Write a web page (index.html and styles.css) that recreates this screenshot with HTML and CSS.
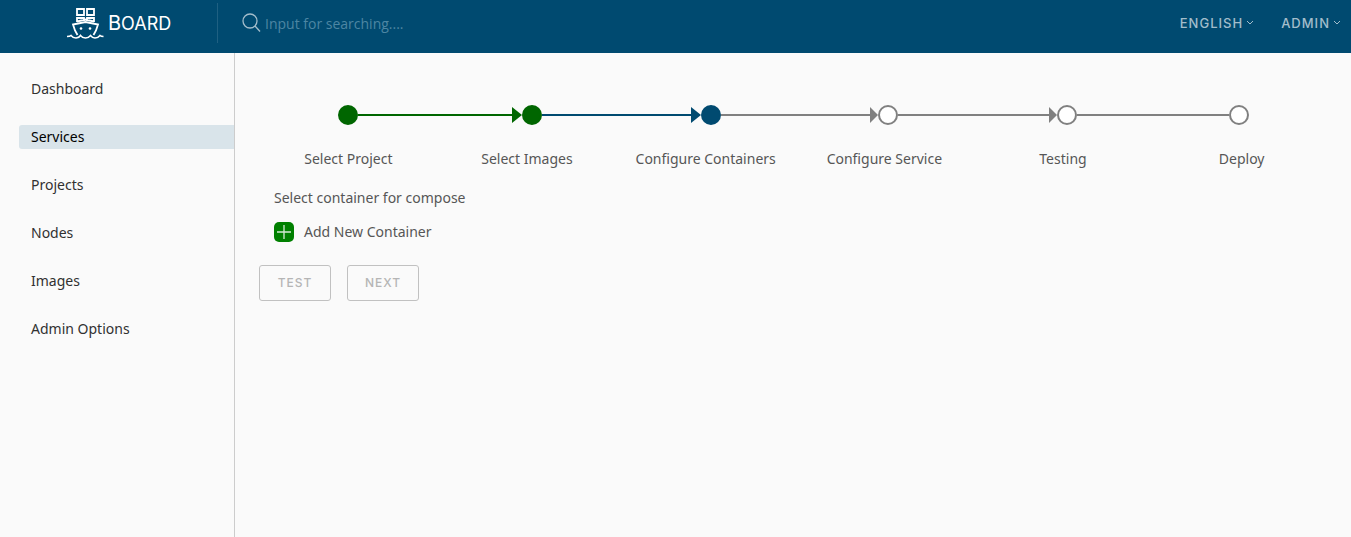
FILE: index.html
```html
<!DOCTYPE html>
<html lang="en">
<head>
<meta charset="utf-8">
<title>Board</title>
<link rel="stylesheet" href="styles.css">
</head>
<body>
<header class="header">
  <a class="brand" href="#">
    <svg class="brand-logo" width="38" height="32" viewBox="0 0 38 32" fill="none" stroke="#fff" stroke-width="1.800">
      <path d="M10 2h7v6h-7zM20 2h7v6h-7z"/>
      <path d="M10 15v-4h7v3M20 14v-3h7v4M10 14.500l8.500-2 8.500 2"/>
      <path d="M10.500 28L8 23.500 6 17.500l12.500-2.500L31 17.500l-2 6-2.500 4.500"/>
      <path d="M0 29.500q3 0 4-1 2 2.500 5 2.500 3 0 4.500-2.500 2 2.500 5 2.500t5-2.500q2 2.500 4.500 2.500 3 0 5-2.500 1 1 3.500 1" stroke-width="1.600"/>
      <circle cx="14" cy="21.500" r="1.300" fill="#fff" stroke="none"/>
      <circle cx="23" cy="21.500" r="1.300" fill="#fff" stroke="none"/>
    </svg>
    <span class="brand-name">Board</span>
  </a>
  <form class="search">
    <svg width="20" height="20" viewBox="0 0 20 20" fill="none" stroke="#a3bdcb" stroke-width="1.300">
      <circle cx="8" cy="8" r="7"/><path d="M13 13l5 5.500"/>
    </svg>
    <input class="search-input" type="text" aria-label="Search" placeholder="Input for searching....">
  </form>
  <nav class="header-actions">
    <button class="header-button" type="button">ENGLISH
      <svg width="8" height="6" viewBox="0 0 8 6" fill="none" stroke="currentColor"><path d="M1 1l3 3 3-3"/></svg>
    </button>
    <button class="header-button" type="button">ADMIN
      <svg width="8" height="6" viewBox="0 0 8 6" fill="none" stroke="currentColor"><path d="M1 1l3 3 3-3"/></svg>
    </button>
  </nav>
</header>
<div class="body">
  <nav class="sidebar">
    <a class="nav-link" href="#">Dashboard</a>
    <a class="nav-link active" href="#">Services</a>
    <a class="nav-link" href="#">Projects</a>
    <a class="nav-link" href="#">Nodes</a>
    <a class="nav-link" href="#">Images</a>
    <a class="nav-link" href="#">Admin Options</a>
  </nav>
  <main class="content">
    <div class="track">
      <span class="dot done"></span><span class="line done arrow"></span>
      <span class="dot done"></span><span class="line current arrow"></span>
      <span class="dot current"></span><span class="line arrow short"></span>
      <span class="dot"></span><span class="line arrow short"></span>
      <span class="dot"></span><span class="line"></span>
      <span class="dot"></span>
    </div>
    <ol class="labels">
      <li>Select Project</li>
      <li>Select Images</li>
      <li>Configure Containers</li>
      <li>Configure Service</li>
      <li>Testing</li>
      <li>Deploy</li>
    </ol>
    <section class="compose">
      <p class="compose-title">Select container for compose</p>
      <button class="add" type="button">
        <svg width="20" height="20" viewBox="0 0 20 20"><rect width="20" height="20" rx="5" fill="#008000"/><path d="M3 10h14M10 3v14" stroke="#d5ead5" stroke-width="1.300"/></svg>
        Add New Container
      </button>
    </section>
    <div class="buttons">
      <button class="btn" type="button" disabled>TEST</button>
      <button class="btn" type="button" disabled>NEXT</button>
    </div>
  </main>
</div>
</body>
</html>
```
FILE: styles.css
```css
* { box-sizing: border-box; }
body {
  margin: 0;
  min-height: 100vh;
  display: flex;
  flex-direction: column;
  background: #fafafa;
  color: #565656;
  font-family: "Noto Sans", sans-serif;
  font-size: 14px;
  line-height: 24px;
}
button { font: inherit; color: inherit; background: none; border: 0; padding: 0; }
.header {
  display: flex;
  align-items: center;
  height: 53px;
  padding-bottom: 7px;
  background: #004a70;
}
.brand {
  display: flex;
  align-items: center;
  gap: 3px;
  width: 218px;
  height: 40px;
  padding-left: 67px;
  border-right: 1px solid #1f6082;
  color: #fff;
  text-decoration: none;
}
.brand-name {
  font-family: Inter, sans-serif;
  font-size: 18px;
  text-transform: uppercase;
}
.brand-name::first-letter { font-size: 20px; }
.search { flex: 1; display: flex; align-items: center; gap: 3px; padding-left: 24px; }
.search-input {
  flex: 1;
  border: 0;
  padding: 0;
  outline: 0;
  background: none;
  color: #fff;
  font-family: "Open Sans", sans-serif;
  font-size: 14px;
}
.search-input::placeholder { color: #4d86a3; opacity: 1; }
.header-actions { display: flex; gap: 27px; padding-right: 10px; }
.header-button {
  display: flex;
  align-items: center;
  gap: 3px;
  color: #a3bdcb;
  font-family: Inter, sans-serif;
  font-size: 13px;
  font-weight: 500;
  letter-spacing: 1px;
}
.body { flex: 1; display: flex; }
.sidebar {
  display: flex;
  flex-direction: column;
  gap: 24px;
  width: 235px;
  padding: 24px 0 24px 19px;
  border-right: 1px solid #ccc;
}
.nav-link {
  padding-left: 12px;
  border-radius: 3px 0 0 3px;
  color: #313131;
  text-decoration: none;
}
.nav-link.active { background: #d9e4ea; color: #000; }
.content { flex: 1; padding: 52px 20px 24px 24px; }
.track {
  display: grid;
  grid-template-columns: 20px 164fr 20px 159fr 20px 157fr 20px 159fr 20px 152fr 20px;
  align-items: center;
  padding: 0 82px 0 79px;
}
.dot { height: 20px; border: 2px solid #808080; border-radius: 50%; background: #fff; }
.dot.done { background: #060; border-color: #060; }
.dot.current { background: #004a70; border-color: #004a70; }
.line { display: flex; align-items: center; color: #808080; }
.line.done { color: #060; }
.line.current { color: #004a70; }
.line::before { content: ""; flex: 1; height: 2px; background: currentColor; }
.line.arrow::after {
  content: "";
  border: 8px solid transparent;
  border-left: 10px solid currentColor;
  border-right: 0;
}
.line.short::after { border-left-width: 8px; }
.labels {
  display: grid;
  grid-template-columns: repeat(6, 1fr);
  margin: 22px 0 0;
  padding: 0;
  list-style: none;
  text-align: center;
}
.compose {
  display: flex;
  flex-direction: column;
  align-items: flex-start;
  gap: 10px;
  padding: 15px 15px 0;
}
.compose-title { margin: 0; }
.add { display: flex; align-items: center; gap: 10px; }
.buttons { display: flex; gap: 16px; padding-top: 21px; }
.btn {
  width: 72px;
  height: 36px;
  border: 1px solid #c1c1c1;
  border-radius: 3px;
  color: #b5b5b5;
  font-family: Inter, sans-serif;
  font-size: 12px;
  font-weight: 500;
  letter-spacing: 1px;
}
```
